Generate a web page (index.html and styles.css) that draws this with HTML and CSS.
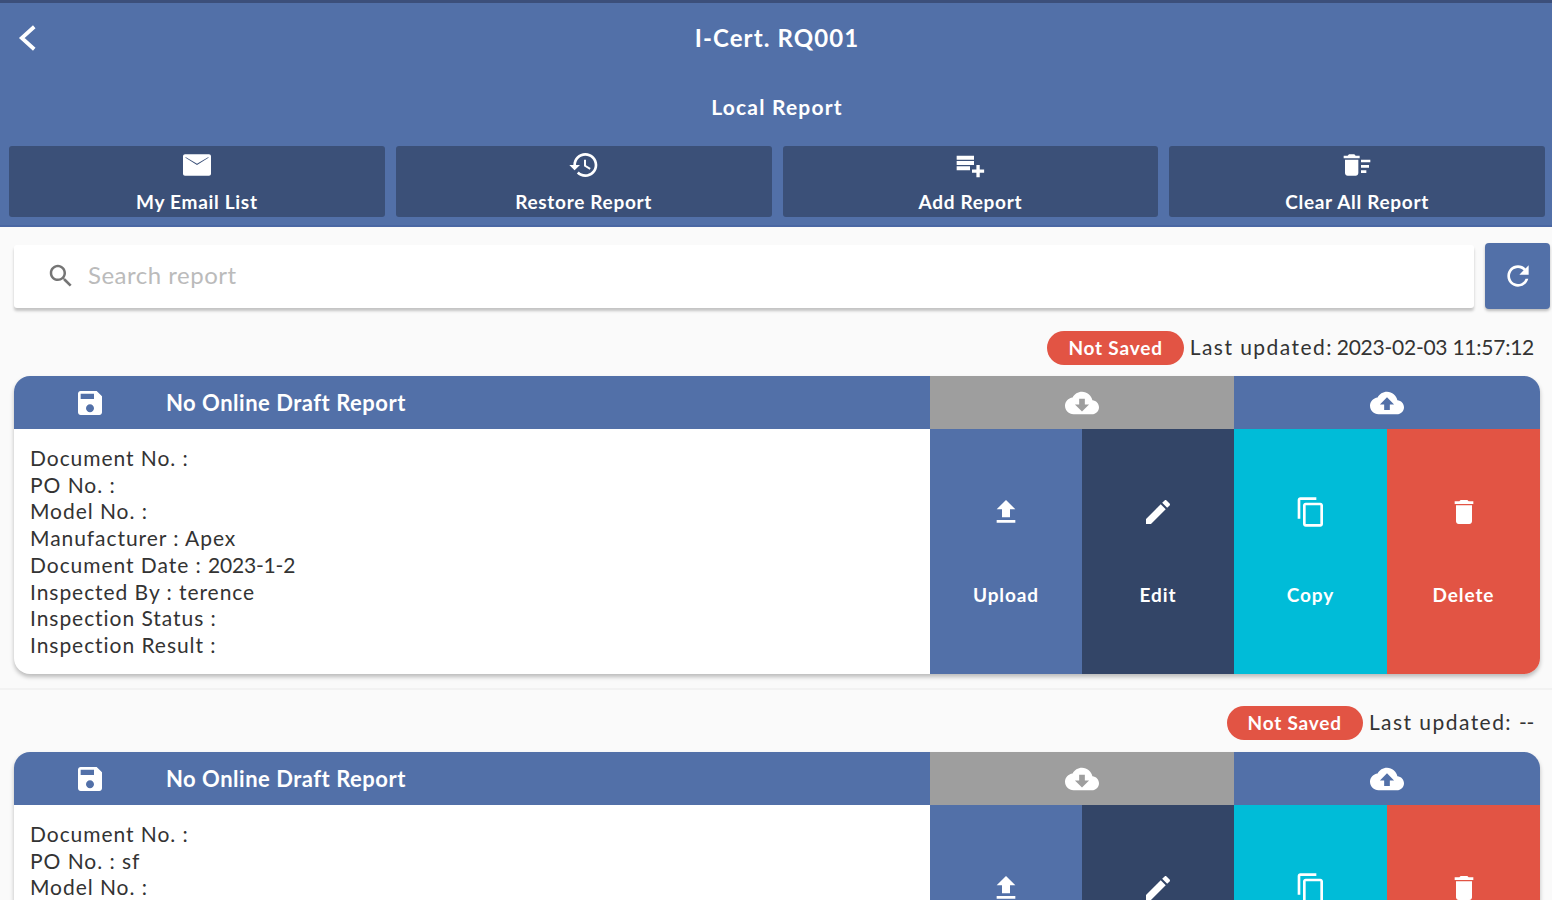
FILE: index.html
```html
<!DOCTYPE html>
<html lang="en">
<head>
    <meta charset="UTF-8">
    <meta name="viewport" content="width=device-width, initial-scale=1.0">
    <title>I-Cert. RQ001 - Local Report</title>
    <link rel="stylesheet" href="styles.css">
</head>
<body>
    <div class="page">
        <header class="app-header">
            <div class="title-bar">
                <svg class="back-icon" viewBox="0 0 24 24"><path d="M17 3 7 12l10 9" /></svg>
                <h1>I-Cert. RQ001</h1>
            </div>
            <h2>Local Report</h2>
            <nav class="toolbar">
                <button class="tool-btn">
                    <svg viewBox="0 0 24 24" class="icon-mail"><path d="M21 4H3c-.8 0-1.500.7-1.500 1.500v13c0 .8.7 1.500 1.500 1.500h18c.8 0 1.500-.7 1.500-1.500v-13c0-.8-.7-1.500-1.500-1.500zm-.4 2.600L12 12 3.400 6.600V6L12 11l8.600-5v.6z"/></svg>
                    <span>My Email List</span>
                </button>
                <button class="tool-btn">
                    <svg viewBox="0 0 24 24"><path d="M13 3c-4.970 0-9 4.030-9 9H1l3.890 3.890.07.14L9 12H6c0-3.870 3.130-7 7-7s7 3.130 7 7-3.130 7-7 7c-1.930 0-3.680-.79-4.940-2.060l-1.420 1.420C8.270 19.990 10.510 21 13 21c4.970 0 9-4.030 9-9s-4.030-9-9-9zm-1 5v5l4.280 2.540.72-1.210-3.500-2.080V8H12z"/></svg>
                    <span>Restore Report</span>
                </button>
                <button class="tool-btn">
                    <svg viewBox="0 0 24 24"><path d="M2 5h13v3H2zm0 4h13v3H2zm0 4h10v3H2zm14.800-1h2.500v3.300h3.300v2.500h-3.300v3.300h-2.500v-3.300h-3.300v-2.500h3.300z"/></svg>
                    <span>Add Report</span>
                </button>
                <button class="tool-btn">
                    <svg viewBox="0 0 24 24"><path d="M15 16h4v2h-4zm0-8h7v2h-7zm0 4h6v2h-6zM3 18c0 1.100.9 2 2 2h6c1.100 0 2-.9 2-2V8H3v10zM14 5h-3l-1-1H6L5 5H2v2h12z"/></svg>
                    <span>Clear All Report</span>
                </button>
            </nav>
        </header>

        <div class="search-row">
            <div class="search-box">
                <svg viewBox="0 0 24 24"><path d="M15.500 14h-.79l-.28-.27C15.410 12.590 16 11.110 16 9.500 16 5.910 13.090 3 9.500 3S3 5.910 3 9.500 5.910 16 9.500 16c1.610 0 3.090-.59 4.230-1.570l.27.28v.79l5 4.990L20.490 19l-4.990-5zm-6 0C7.010 14 5 11.990 5 9.500S7.010 5 9.500 5 14 7.010 14 9.500 11.990 14 9.500 14z"/></svg>
                <span>Search report</span>
            </div>
            <button class="refresh-btn">
                <svg viewBox="0 0 24 24"><path d="M17.650 6.350C16.200 4.900 14.210 4 12 4c-4.420 0-7.990 3.580-7.990 8s3.570 8 7.990 8c3.730 0 6.840-2.550 7.730-6h-2.080c-.82 2.330-3.040 4-5.650 4-3.310 0-6-2.690-6-6s2.690-6 6-6c1.660 0 3.140.69 4.220 1.780L13 11h7V4l-2.350 2.350z"/></svg>
            </button>
        </div>

        <section class="report first">
            <div class="status-line">
                <span class="pill">Not Saved</span>
                <span class="updated">Last updated: <span class="stamp">2023-02-03 11:57:12</span></span>
            </div>
            <div class="card">
                <div class="card-head">
                    <div class="head-title">
                        <svg viewBox="0 0 24 24"><path d="M17 3H5c-1.110 0-2 .9-2 2v14c0 1.100.89 2 2 2h14c1.100 0 2-.9 2-2V7l-4-4zm-5 16c-1.660 0-3-1.340-3-3s1.340-3 3-3 3 1.340 3 3-1.340 3-3 3zm3-10H5V5h10v4z"/></svg>
                        <span>No Online Draft Report</span>
                    </div>
                    <div class="head-cloud grey">
                        <svg viewBox="0 0 24 24"><path d="M19.350 10.040C18.670 6.590 15.640 4 12 4 9.110 4 6.600 5.640 5.350 8.040 2.340 8.360 0 10.910 0 14c0 3.310 2.690 6 6 6h13c2.760 0 5-2.240 5-5 0-2.640-2.050-4.780-4.650-4.960zM17 13l-5 5-5-5h3V9h4v4h3z"/></svg>
                    </div>
                    <div class="head-cloud">
                        <svg viewBox="0 0 24 24"><path d="M19.350 10.040C18.670 6.590 15.640 4 12 4 9.110 4 6.600 5.640 5.350 8.040 2.340 8.360 0 10.910 0 14c0 3.310 2.690 6 6 6h13c2.760 0 5-2.240 5-5 0-2.640-2.050-4.780-4.650-4.960zM14 13v4h-4v-4H7l5-5 5 5h-3z"/></svg>
                    </div>
                </div>
                <div class="card-body">
                    <ul class="details">
                        <li>Document No. :</li>
                        <li>PO No. :</li>
                        <li>Model No. :</li>
                        <li>Manufacturer : Apex</li>
                        <li>Document Date : <span class="stamp">2023-1-2</span></li>
                        <li>Inspected By : terence</li>
                        <li>Inspection Status :</li>
                        <li>Inspection Result :</li>
                    </ul>
                    <div class="actions">
                        <button class="action upload">
                            <svg viewBox="0 0 24 24"><path d="M9 16h6v-6h4l-7-7-7 7h4zm-4 2h14v2H5z"/></svg>
                            <span>Upload</span>
                        </button>
                        <button class="action edit">
                            <svg viewBox="0 0 24 24"><path d="M3 17.250V21h3.750L17.810 9.940l-3.750-3.750L3 17.250zM20.710 7.040c.39-.39.39-1.020 0-1.410l-2.340-2.340c-.39-.39-1.020-.39-1.410 0l-1.830 1.830 3.750 3.750 1.830-1.830z"/></svg>
                            <span>Edit</span>
                        </button>
                        <button class="action copy">
                            <svg viewBox="0 0 24 24"><path d="M16 1H4c-1.100 0-2 .9-2 2v14h2V3h12V1zm3 4H8c-1.100 0-2 .9-2 2v14c0 1.100.9 2 2 2h11c1.100 0 2-.9 2-2V7c0-1.100-.9-2-2-2zm0 16H8V7h11v14z"/></svg>
                            <span>Copy</span>
                        </button>
                        <button class="action delete">
                            <svg viewBox="0 0 24 24"><path d="M6 19c0 1.100.9 2 2 2h8c1.100 0 2-.9 2-2V7H6v12zM19 4h-3.500l-1-1h-5l-1 1H5v2h14V4z"/></svg>
                            <span>Delete</span>
                        </button>
                    </div>
                </div>
            </div>
        </section>

        <section class="report">
            <div class="status-line">
                <span class="pill">Not Saved</span>
                <span class="updated">Last updated: <span class="stamp">--</span></span>
            </div>
            <div class="card">
                <div class="card-head">
                    <div class="head-title">
                        <svg viewBox="0 0 24 24"><path d="M17 3H5c-1.110 0-2 .9-2 2v14c0 1.100.89 2 2 2h14c1.100 0 2-.9 2-2V7l-4-4zm-5 16c-1.660 0-3-1.340-3-3s1.340-3 3-3 3 1.340 3 3-1.340 3-3 3zm3-10H5V5h10v4z"/></svg>
                        <span>No Online Draft Report</span>
                    </div>
                    <div class="head-cloud grey">
                        <svg viewBox="0 0 24 24"><path d="M19.350 10.040C18.670 6.590 15.640 4 12 4 9.110 4 6.600 5.640 5.350 8.040 2.340 8.360 0 10.910 0 14c0 3.310 2.690 6 6 6h13c2.760 0 5-2.240 5-5 0-2.640-2.050-4.780-4.650-4.960zM17 13l-5 5-5-5h3V9h4v4h3z"/></svg>
                    </div>
                    <div class="head-cloud">
                        <svg viewBox="0 0 24 24"><path d="M19.350 10.040C18.670 6.590 15.640 4 12 4 9.110 4 6.600 5.640 5.350 8.040 2.340 8.360 0 10.910 0 14c0 3.310 2.690 6 6 6h13c2.760 0 5-2.240 5-5 0-2.640-2.050-4.780-4.650-4.960zM14 13v4h-4v-4H7l5-5 5 5h-3z"/></svg>
                    </div>
                </div>
                <div class="card-body">
                    <ul class="details">
                        <li>Document No. :</li>
                        <li>PO No. : sf</li>
                        <li>Model No. :</li>
                    </ul>
                    <div class="actions">
                        <button class="action upload">
                            <svg viewBox="0 0 24 24"><path d="M9 16h6v-6h4l-7-7-7 7h4zm-4 2h14v2H5z"/></svg>
                            <span>Upload</span>
                        </button>
                        <button class="action edit">
                            <svg viewBox="0 0 24 24"><path d="M3 17.250V21h3.750L17.810 9.940l-3.750-3.750L3 17.250zM20.710 7.040c.39-.39.39-1.020 0-1.410l-2.340-2.340c-.39-.39-1.020-.39-1.410 0l-1.830 1.830 3.750 3.750 1.830-1.830z"/></svg>
                            <span>Edit</span>
                        </button>
                        <button class="action copy">
                            <svg viewBox="0 0 24 24"><path d="M16 1H4c-1.100 0-2 .9-2 2v14h2V3h12V1zm3 4H8c-1.100 0-2 .9-2 2v14c0 1.100.9 2 2 2h11c1.100 0 2-.9 2-2V7c0-1.100-.9-2-2-2zm0 16H8V7h11v14z"/></svg>
                            <span>Copy</span>
                        </button>
                        <button class="action delete">
                            <svg viewBox="0 0 24 24"><path d="M6 19c0 1.100.9 2 2 2h8c1.100 0 2-.9 2-2V7H6v12zM19 4h-3.500l-1-1h-5l-1 1H5v2h14V4z"/></svg>
                            <span>Delete</span>
                        </button>
                    </div>
                </div>
            </div>
        </section>
    </div>
</body>
</html>
```

FILE: styles.css
```css
* {
    margin: 0;
    padding: 0;
    box-sizing: border-box;
    font-family: Lato, "Noto Sans", sans-serif;
}

body {
    background: #fafafa;
    color: #333;
}

svg {
    fill: #fff;
    display: block;
}

button {
    border: none;
    color: #fff;
}

.page {
    height: 900px;
    overflow: hidden;
}

.app-header {
    height: 227px;
    background: #5270a8;
    border-top: 3px solid #3c4f7a;
    border-bottom: 2px solid #4a67a3;
    padding: 0 7px 0 9px;
    color: #fff;
}

.title-bar {
    position: relative;
    height: 68px;
    margin-bottom: 1px;
    display: flex;
    align-items: center;
    justify-content: center;
}

.title-bar h1 {
    font-size: 24px;
    font-weight: 700;
    letter-spacing: 1.1px;
}

.back-icon {
    position: absolute;
    left: 4px;
    top: 20px;
    width: 30px;
    height: 30px;
    fill: none;
    stroke: #fff;
    stroke-width: 3;
}

.app-header h2 {
    height: 70px;
    line-height: 70px;
    text-align: center;
    font-size: 21px;
    font-weight: 700;
    letter-spacing: 1.2px;
}

.toolbar {
    display: flex;
    gap: 11px;
    margin-top: 4px;
}

.tool-btn {
    flex: 1;
    height: 71px;
    background: #3b5078;
    border-radius: 3px;
    padding-top: 3px;
    display: flex;
    flex-direction: column;
    align-items: center;
    font-size: 19px;
    font-weight: 700;
    letter-spacing: 0.7px;
}

.tool-btn svg {
    width: 32px;
    height: 32px;
    margin-bottom: 9px;
}

.search-row {
    display: flex;
    align-items: center;
    gap: 11px;
    padding: 16px 2px 0 14px;
}

.search-box {
    flex: 1;
    height: 63px;
    background: #fff;
    border-radius: 3px;
    box-shadow: 0 3px 3px rgba(0, 0, 0, 0.22);
    padding: 0 0 3px 32px;
    display: flex;
    align-items: center;
    gap: 12px;
    font-size: 24px;
    letter-spacing: 0.5px;
    color: #bbb;
}

.search-box svg {
    width: 30px;
    height: 30px;
    margin-top: 2px;
    fill: #757575;
}

.refresh-btn {
    width: 65px;
    height: 66px;
    background: #5270a8;
    border-radius: 4px;
    box-shadow: 0 2px 3px rgba(0, 0, 0, 0.25);
    display: flex;
    align-items: center;
    justify-content: center;
}

.refresh-btn svg {
    width: 32px;
    height: 32px;
}

.report {
    padding: 16px 12px 0 14px;
    height: 375px;
    border-bottom: 2px solid #f2f2f2;
}

.report.first {
    padding-top: 22px;
    height: 381px;
}

.status-line {
    display: flex;
    justify-content: flex-end;
    align-items: center;
    gap: 6px;
    height: 34px;
    margin-bottom: 12px;
    padding-right: 6px;
}

.first .status-line {
    margin-bottom: 11px;
}

.pill {
    height: 34px;
    line-height: 34px;
    padding: 0 21px;
    background: #e25444;
    border-radius: 17px;
    color: #fff;
    font-size: 19px;
    font-weight: 700;
    letter-spacing: 0.8px;
}

.updated {
    font-size: 21px;
    line-height: 32px;
    padding-bottom: 2px;
    letter-spacing: 1.45px;
    color: #333;
}

.updated .stamp {
    letter-spacing: -0.25px;
}

.first .updated .stamp {
    margin-left: -3px;
}

.card {
    background: #fff;
    border-radius: 16px;
    overflow: hidden;
    box-shadow: 0 3px 4px rgba(0, 0, 0, 0.25);
}

.card-head {
    display: flex;
    height: 53px;
    background: #5270a8;
}

.head-title {
    width: 916px;
    display: flex;
    align-items: center;
    color: #fff;
    font-size: 22px;
    font-weight: 700;
    letter-spacing: 0.5px;
    padding-left: 60px;
}

.head-title svg {
    width: 32px;
    height: 32px;
    margin-right: 60px;
}

.head-cloud {
    flex: 1;
    display: flex;
    align-items: center;
    justify-content: center;
}

.head-cloud.grey {
    flex: 0 0 304px;
    background: #9e9e9e;
}

.head-cloud svg {
    width: 34px;
    height: 34px;
}

.card-body {
    display: flex;
    height: 245px;
}

.details {
    width: 916px;
    list-style: none;
    padding: 16px;
    font-size: 21px;
    line-height: 26.7px;
    letter-spacing: 0.95px;
    color: #333;
}

.details .stamp {
    letter-spacing: -0.2px;
}

.actions {
    flex: 1;
    display: flex;
}

.action {
    flex: 1;
    display: flex;
    flex-direction: column;
    align-items: center;
    padding-top: 67px;
    font-size: 19px;
    font-weight: 700;
    letter-spacing: 0.9px;
}

.action.upload,
.action.edit {
    flex: 0 0 152px;
}

.action svg {
    width: 32px;
    height: 32px;
    margin-bottom: 55px;
}

.upload {
    background: #5270a8;
}

.edit {
    background: #334567;
}

.copy {
    background: #00bcd8;
}

.delete {
    background: #e25444;
}
```
